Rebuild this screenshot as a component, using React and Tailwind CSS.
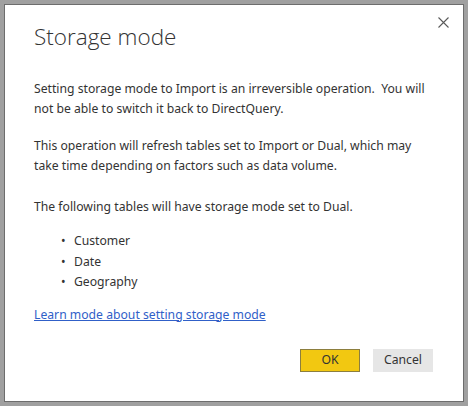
export default function App() {
  const font = { fontFamily: '"Segoe UI", "Noto Sans", "Open Sans", sans-serif' };
  return (
    <div className="w-[468px] h-[406px] bg-[#a0a0a0] p-1" style={font}>
      <div className="relative w-full h-full bg-white border border-[#6d6d6d] pl-[29px] pr-[26px] pt-[16px] text-[#333333]">
        <button className="absolute right-[10px] top-[7px] w-[20px] h-[20px] flex items-center justify-center">
          <svg width="11" height="11" viewBox="0 0 11 11">
            <path d="M0.5 0.5 L10.5 10.5 M10.5 0.5 L0.5 10.5" stroke="#5a5a5a" strokeWidth="1.1" />
          </svg>
        </button>
        <h1 className="text-[22.5px] leading-[32px] font-light text-[#333333]" style={{ fontFamily: '"Open Sans", "Noto Sans", sans-serif' }}>Storage mode</h1>
        <div className="mt-[26px] text-[12.2px] leading-[20px]">
          <p>Setting storage mode to Import is an irreversible operation.&nbsp; You will not be able to switch it back to DirectQuery.</p>
          <p className="mt-[17px]">This operation will refresh tables set to Import or Dual, which may take time depending on factors such as data volume.</p>
          <p className="mt-[21px]">The following tables will have storage mode set to Dual.</p>
          <ul className="mt-[14px]">
            {["Customer", "Date", "Geography"].map((t) => (
              <li key={t} className="flex h-[20.5px]">
                <span className="w-[40px] pl-[27px]">•</span>
                <span>{t}</span>
              </li>
            ))}
          </ul>
          <a className="block mt-[12px] text-[#3060c8] underline">Learn mode about setting storage mode</a>
        </div>
        <div className="flex justify-end gap-[13px] mt-[24px] pr-[4px]">
          <button className="w-[60px] h-[23px] bg-[#f2c811] border border-[#8c7e3e] text-[12.2px] text-[#333]">OK</button>
          <button className="w-[60px] h-[23px] bg-[#e6e6e6] text-[12.2px] text-[#333]">Cancel</button>
        </div>
      </div>
    </div>
  );
}
